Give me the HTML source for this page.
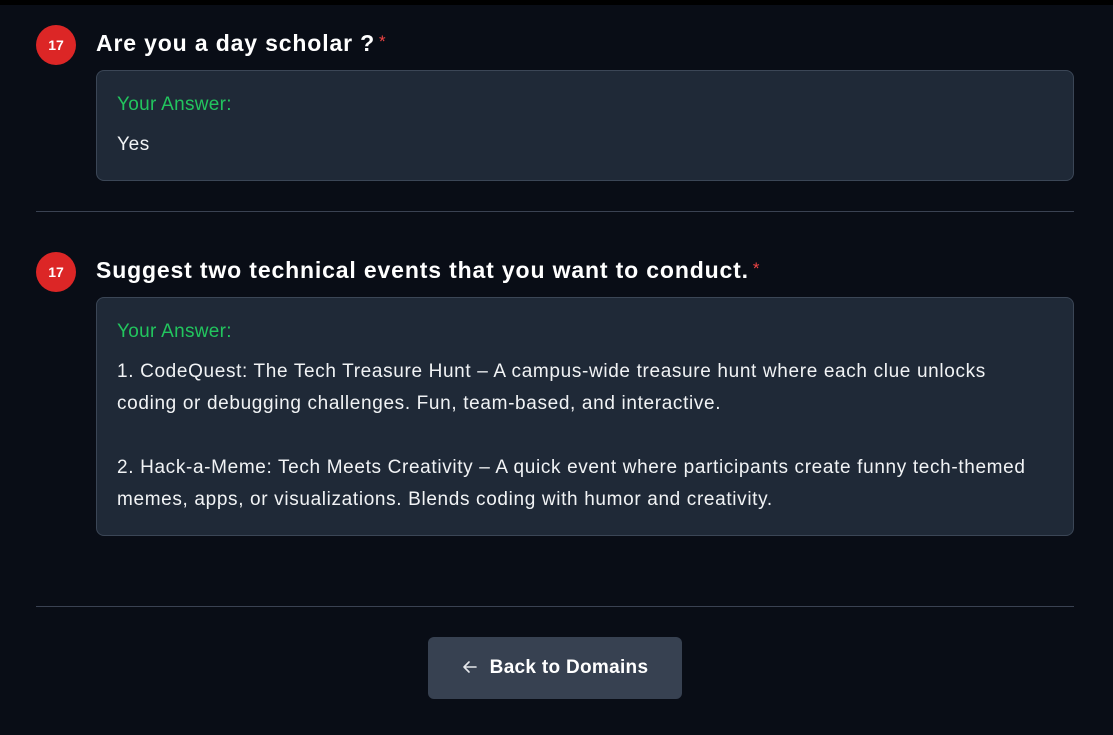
<!DOCTYPE html>
<html><head><meta charset="utf-8"><style>
*{margin:0;padding:0;box-sizing:border-box}
body{width:1113px;height:735px;background:#090d16;font-family:"Liberation Sans",sans-serif;color:#fff;position:relative;overflow:hidden}
.top{position:absolute;left:0;top:0;width:1113px;height:5px;background:#000}
.badge{position:absolute;left:36px;width:40px;height:40px;border-radius:50%;background:#dc2626;color:#fff;font-weight:bold;font-size:14px;text-align:center;line-height:40px}
.title{position:absolute;left:96px;font-size:23px;font-weight:bold;white-space:nowrap;letter-spacing:0.85px}
.title span{color:#ef4444;font-size:17px;font-weight:normal;vertical-align:4px;margin-left:4px}
.box{position:absolute;left:96px;width:978px;background:#1f2937;border:1px solid #3b4656;border-radius:8px;padding:22px 20px}
.lbl{color:#22c55e;font-size:19px;line-height:24px;letter-spacing:0.3px}
.txt{font-size:19px;line-height:32px;margin-top:12px;color:#f1f3f5;letter-spacing:0.65px;white-space:nowrap}
.hr{position:absolute;left:36px;width:1038px;height:1px;background:#3a4252}
.btn{position:absolute;left:428px;top:637px;width:254px;height:62px;background:#374151;border-radius:6px;font-size:19px;font-weight:bold;text-align:center;line-height:62px;letter-spacing:0.3px}
</style></head><body>
<div class="top"></div>
<div class="badge" style="top:25px">17</div>
<div class="title" style="top:30px">Are you a day scholar ?<span>*</span></div>
<div class="box" style="top:70px;height:111px"><div class="lbl" style="margin-top:0px">Your Answer:</div><div class="txt" style="margin-top:12px">Yes</div></div>
<div class="hr" style="top:211px"></div>
<div class="badge" style="top:252px">17</div>
<div class="title" style="top:257px">Suggest two technical events that you want to conduct.<span>*</span></div>
<div class="box" style="top:297px;height:239px"><div class="lbl" style="margin-top:0px">Your Answer:</div><div class="txt">1. CodeQuest: The Tech Treasure Hunt – A campus-wide treasure hunt where each clue unlocks<br>coding or debugging challenges. Fun, team-based, and interactive.<br><br>2. Hack-a-Meme: Tech Meets Creativity – A quick event where participants create funny tech-themed<br>memes, apps, or visualizations. Blends coding with humor and creativity.</div></div>
<div class="hr" style="top:606px"></div>
<div class="btn"><svg width="16" height="14" viewBox="0 0 16 14" style="vertical-align:middle;margin-right:12px;margin-top:-1px"><path d="M14 7H2M7 2L2 7l5 5" stroke="#e5e7eb" stroke-width="1.6" fill="none" stroke-linecap="round" stroke-linejoin="round"/></svg>Back to Domains</div>
</body></html>
